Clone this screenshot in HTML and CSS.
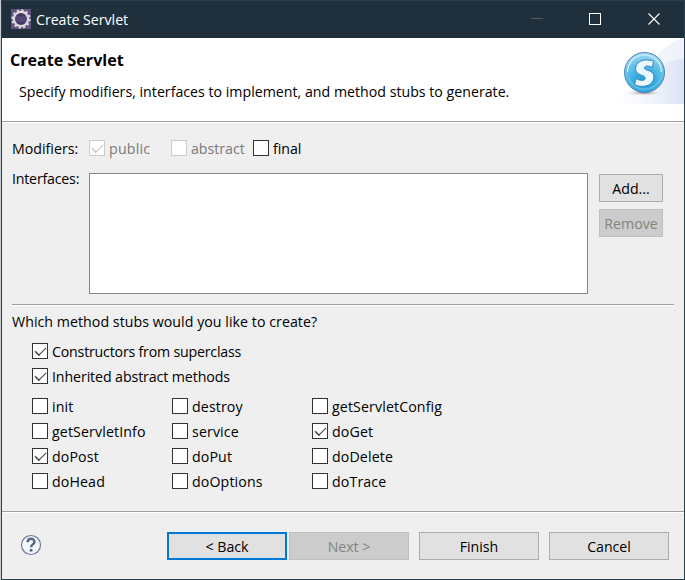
FILE: index.html
```
<!DOCTYPE html>
<html lang="en">
<head>
<meta charset="utf-8">
<title>Create Servlet</title>
<link rel="stylesheet" href="styles.css">
</head>
<body>
<div class="window">
  <header class="titlebar">
    <svg class="app-icon" width="20" height="20" viewBox="0 0 20 20">
      <rect width="20" height="20" fill="#65517f"/>
      <circle cx="10" cy="10" r="8.7" fill="none" stroke="#d9d7d9" stroke-width="2" stroke-dasharray="2.4 2.15"/>
      <circle cx="10" cy="10" r="7.1" fill="#423765" stroke="#dedddd" stroke-width="2.2"/>
      <path d="M5 8h10M4.500 10h11M5 12h10" stroke="#6b5d91" stroke-width=".8"/>
    </svg>
    <span class="caption">Create Servlet</span>
    <svg class="controls" width="131" height="14" viewBox="0 0 131 14" fill="none">
      <path d="M0 5.500h12" stroke="#4e5c65"/>
      <rect x="58.500" y=".5" width="11" height="11" stroke="#fff"/>
      <path d="M117.500 .5l11 11M128.500 .5l-11 11" stroke="#fff" stroke-width="1.1"/>
    </svg>
  </header>
  <section class="banner">
    <div class="banner-text">
      <h1>Create Servlet</h1>
      <p>Specify modifiers, interfaces to implement, and method stubs to generate.</p>
    </div>
    <svg class="banner-art" width="75" height="66" viewBox="0 0 75 66">
      <defs>
        <linearGradient id="sweep" x1="0" x2="1"><stop offset="0" stop-color="#fff"/><stop offset=".5" stop-color="#f7f9fd"/><stop offset="1" stop-color="#edf1fa"/></linearGradient>
        <linearGradient id="sweep2" x1="0" x2="1"><stop offset="0" stop-color="#fff" stop-opacity="0"/><stop offset="1" stop-color="#dbe2f5"/></linearGradient>
        <radialGradient id="ball" cx=".5" cy=".75" r=".78"><stop offset="0" stop-color="#169bd5"/><stop offset=".35" stop-color="#35ade0"/><stop offset=".7" stop-color="#70c6eb"/><stop offset="1" stop-color="#b5e1f5"/></radialGradient>
        <radialGradient id="shade"><stop offset="0" stop-color="#9a7f8c"/><stop offset="1" stop-color="#fff" stop-opacity="0"/></radialGradient>
      </defs>
      <path d="M0 66C32 50 42 8 75 0V66Z" fill="url(#sweep)"/>
      <path d="M8 66C35 50 35 25 75 21V66Z" fill="url(#sweep2)"/>
      <ellipse cx="35" cy="55" rx="21" ry="3" fill="url(#shade)"/>
      <circle cx="35.500" cy="34.500" r="20" fill="url(#ball)" stroke="#4b83b7"/>
      <path d="M18.500 34a17 17 0 0 1 34 0" fill="none" stroke="#d2edf8" stroke-width="1.2"/>
      <path d="M19.500 40a17 17 0 0 0 32 0" fill="none" stroke="#67bee4" stroke-width="1.6"/>
      <path d="M44.500 23C37 20.500 27 22 26.500 30.500C26.200 37.800 36.500 36.500 36.200 40.300C35.900 43.500 30.500 42.500 26.500 40.500L25.800 47C33.500 50 44.500 48.500 45 39C45.400 31.500 35 33 35.400 29.700C35.700 27.200 40 27.800 43.500 29.500Z" fill="#e8f8ff" stroke="#4180b6" stroke-width="1"/>
    </svg>
  </section>
  <main class="content">
    <div class="modifiers">
      <span class="label">Modifiers:</span>
      <span class="check on off w-public"><i></i><span>public</span></span>
      <span class="check off w-abstract"><i></i><span>abstract</span></span>
      <span class="check"><i></i><span>final</span></span>
    </div>
    <div class="interfaces">
      <span class="label">Interfaces:</span>
      <div class="list"></div>
      <div class="side">
        <button type="button">Add...</button>
        <button type="button" disabled>Remove</button>
      </div>
    </div>
    <div class="rule"></div>
    <p class="question">Which method stubs would you like to create?</p>
    <div class="wide-options">
      <span class="check on tight"><i></i><span>Constructors from superclass</span></span>
      <span class="check on"><i></i><span>Inherited abstract methods</span></span>
    </div>
    <div class="stubs">
      <span class="check"><i></i><span>init</span></span>
      <span class="check"><i></i><span>destroy</span></span>
      <span class="check"><i></i><span>getServletConfig</span></span>
      <span class="check"><i></i><span>getServletInfo</span></span>
      <span class="check"><i></i><span>service</span></span>
      <span class="check on"><i></i><span>doGet</span></span>
      <span class="check on"><i></i><span>doPost</span></span>
      <span class="check"><i></i><span>doPut</span></span>
      <span class="check"><i></i><span>doDelete</span></span>
      <span class="check"><i></i><span>doHead</span></span>
      <span class="check"><i></i><span>doOptions</span></span>
      <span class="check"><i></i><span>doTrace</span></span>
    </div>
  </main>
  <footer class="footer">
    <svg class="help" width="22" height="22" viewBox="0 0 22 22" fill="none">
      <circle cx="11" cy="11" r="9.500" fill="#f5f6f8" stroke="#687a98" stroke-width="1.2"/>
      <path d="M7.700 8.300C7.600 3.700 14.600 3.700 14.400 8C14.300 10.300 11.100 10.500 11.100 13.200" stroke="#546786" stroke-width="2.500"/>
      <circle cx="11.100" cy="16.300" r="1.500" fill="#546786"/>
    </svg>
    <button type="button" class="default">&lt; Back</button>
    <button type="button" disabled class="next">Next &gt;</button>
    <button type="button">Finish</button>
    <button type="button">Cancel</button>
  </footer>
</div>
</body>
</html>
```
FILE: styles.css
```
*, *::after { box-sizing: border-box; }
body {
  margin: 0;
  background: #c9ccd1;
  font: 14.2px/20px "Open Sans", "Noto Sans", sans-serif;
  letter-spacing: -0.03px;
  color: #000;
  overflow: hidden;
}
h1, p { margin: 0; }
.window {
  display: flex;
  flex-direction: column;
  width: 684px;
  height: 580px;
  margin-left: 1px;
  border: 1px solid #2b3f4a;
  background: #efefef;
}
.titlebar {
  display: flex;
  flex: none;
  height: 37px;
  padding: 8px 0 0 9px;
  background: #1f303c;
  color: #fff;
}
.caption { margin: 1px 0 0 5px; }
.controls { margin: 4px 22px 0 auto; }
.banner {
  display: flex;
  flex: none;
  justify-content: space-between;
  height: 85px;
  background: #fff;
  border-bottom: 1px solid #fff;
  box-shadow: inset 0 -1px #a0a0a0;
}
.banner-text { padding: 12px 0 0 8px; white-space: nowrap; }
h1 { font-size: 16px; line-height: 20px; letter-spacing: 0.05px; }
.banner-text p { margin: 12px 0 0 9px; letter-spacing: 0; }
.content { padding: 17px 9px 0 10px; }
.modifiers { display: flex; height: 33px; }
.label { flex: none; width: 77px; margin-top: -1px; letter-spacing: 0; }
.check { display: flex; height: 16px; line-height: 18px; white-space: nowrap; }
.check i {
  position: relative;
  flex: none;
  width: 16px;
  height: 16px;
  margin-right: 4px;
  border: 1px solid #333;
  background: #fff;
}
.check.on i::after {
  content: "";
  position: absolute;
  left: 2px;
  top: 2.5px;
  width: 11px;
  height: 6px;
  background:
    linear-gradient(#404040, #404040) left / 1.5px 100% no-repeat,
    linear-gradient(#404040, #404040) bottom / 100% 1.5px no-repeat;
  transform: rotate(-45deg);
}
.check.off { color: #7a7a7a; }
.check.off i { border-color: #ccc; }
.check.off i::after { opacity: .3; }
.w-public, .w-abstract { width: 82px; }
.w-public { letter-spacing: 0.2px; }
.interfaces { display: flex; height: 131px; }
.interfaces .label { margin-top: -4px; letter-spacing: -0.2px; }
.list { width: 499px; height: 121px; border: 1px solid #828790; background: #fff; }
.side { display: flex; flex-direction: column; gap: 7px; margin: 1px 0 0 11px; }
button {
  width: 120px;
  height: 28px;
  padding: 2px 0 0;
  border: 1px solid #adadad;
  background: #e1e1e1;
  color: #000;
  font: inherit;
  letter-spacing: inherit;
}
button:disabled { border-color: #bfbfbf; background: #ccc; color: #838383; }
.side button { width: 64px; }
.rule { width: 662px; height: 2px; background: #a0a0a0; border-bottom: 1px solid #fff; }
.question { margin-top: 6px; letter-spacing: 0.04px; }
.wide-options { display: grid; gap: 9px; margin: 11px 0 0 20px; letter-spacing: -0.1px; }
.tight { letter-spacing: -0.2px; }
.stubs {
  display: grid;
  grid-template-columns: repeat(3, 140px);
  row-gap: 9px;
  margin: 14px 0 0 20px;
  letter-spacing: 0.12px;
}
.footer {
  display: flex;
  height: 68px;
  margin-top: auto;
  padding: 20px 0 0 18px;
  border-top: 1px solid #a0a0a0;
  box-shadow: inset 0 1px #fff;
}
.help { margin: 2px 125px 0 0; }
.footer button + button { margin-left: 10px; }
.footer button.default { padding-top: 1px; border: 2px solid #0078d7; }
.footer button.next { margin-left: 2px; }
```
